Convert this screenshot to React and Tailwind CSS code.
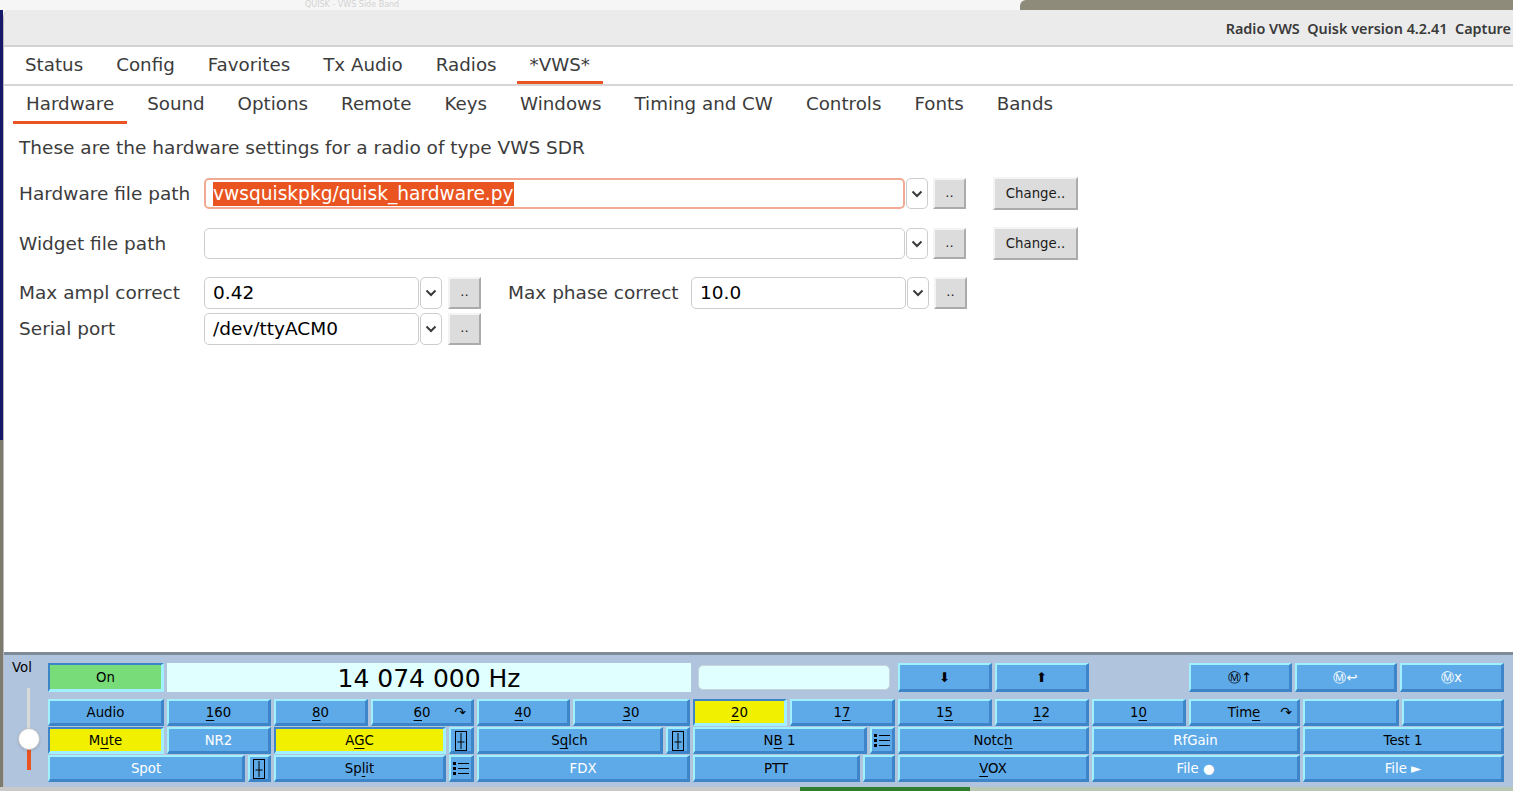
import React from 'react'

const dv = "font-['DejaVu_Sans',sans-serif]"

const raised = 'bg-[#5eaae8] border-t-[#a0f0ff] border-l-[#a0f0ff] border-b-[#3d84c9] border-r-[#3d84c9]'
const pressedB = 'border-t-[#3d84c9] border-l-[#3d84c9] border-b-[#a0f0ff] border-r-[#a0f0ff]'

function Btn({ className = '', pressed, fill, white, children }) {
  const look = pressed ? `${fill} ${pressedB}` : raised
  return (
    <div
      className={`relative flex h-full shrink-0 items-center justify-center border-t-2 border-l-2 border-b-[3px] border-r-[3px] pt-[1px] text-[13.3px] leading-none ${white ? 'text-white' : 'text-black'} ${look} ${className}`}
    >
      <span className="whitespace-pre">{children}</span>
    </div>
  )
}

const U = ({ children }) => <span className="underline decoration-1 underline-offset-[3px]">{children}</span>

const Curl = () => <span className="absolute right-[5px] top-[4px] text-[14px]">↷</span>

const SliderIcon = () => (
  <svg width="14" height="20" viewBox="0 0 14 20" className="inline-block align-middle">
    <rect x="1.5" y="0.5" width="11" height="19" fill="none" stroke="#000" />
    <line x1="7" y1="2" x2="7" y2="18" stroke="#000" />
    <line x1="3.5" y1="11" x2="10.5" y2="11" stroke="#000" />
  </svg>
)

const ListIcon = () => (
  <svg width="18" height="15" viewBox="0 0 18 15" className="inline-block align-middle">
    <rect x="1" y="1" width="3" height="3" fill="#000" />
    <rect x="1" y="6" width="3" height="3" fill="#000" />
    <rect x="1" y="11" width="3" height="3" fill="#000" />
    <line x1="6" y1="2.5" x2="17" y2="2.5" stroke="#000" />
    <line x1="6" y1="7.5" x2="17" y2="7.5" stroke="#000" />
    <line x1="6" y1="12.5" x2="17" y2="12.5" stroke="#000" />
  </svg>
)

const Chevron = () => (
  <svg width="12" height="8" viewBox="0 0 12 8">
    <polyline points="1.5,1.5 6,6 10.5,1.5" fill="none" stroke="#3a3a3a" strokeWidth="2" />
  </svg>
)

function Drop() {
  return (
    <div className="ml-[1px] flex h-full w-[22px] shrink-0 items-center justify-center rounded-[5px] border border-[#cdcdcd] bg-white">
      <Chevron />
    </div>
  )
}

function Dots({ className = '' }) {
  return (
    <div className={`flex h-full w-[33px] shrink-0 items-center justify-center border-t-2 border-l-2 border-b-2 border-r-2 border-t-[#f4f4f4] border-l-[#f4f4f4] border-b-[#ababab] border-r-[#ababab] bg-[#dcdcdc] pb-[2px] text-[13px] text-[#222] ${className}`}>
      ..
    </div>
  )
}

function ChangeBtn() {
  return (
    <div className="ml-[27px] flex h-[33px] w-[85px] shrink-0 items-center justify-center border-t-2 border-l-2 border-b-2 border-r-2 border-t-[#f4f4f4] border-l-[#f4f4f4] border-b-[#ababab] border-r-[#ababab] bg-[#dcdcdc] text-[13.3px] text-[#1a1a1a]">
      Change..
    </div>
  )
}

function Input({ className = '', children }) {
  return (
    <div className={`flex h-full shrink-0 items-center rounded-[5px] border border-[#cdcdcd] bg-white pl-[8px] text-[18.5px] text-black ${className}`}>
      {children}
    </div>
  )
}

const mainTabs = ['Status', 'Config', 'Favorites', 'Tx Audio', 'Radios', '*VWS*']
const subTabs = ['Hardware', 'Sound', 'Options', 'Remote', 'Keys', 'Windows', 'Timing and CW', 'Controls', 'Fonts', 'Bands']

function TabRow({ tabs, active, className }) {
  return (
    <div className={`flex items-stretch gap-[7px] ${className}`}>
      {tabs.map((t) => (
        <div
          key={t}
          className={`flex items-center px-[13px] pt-[1px] text-[18.25px] text-[#3c3c3c] border-b-[3px] ${t === active ? 'border-[#e95420]' : 'border-transparent'}`}
        >
          {t}
        </div>
      ))}
    </div>
  )
}

export default function App() {
  return (
    <div className={`flex h-[791px] w-[1513px] flex-col overflow-hidden bg-[#f4f4f4] ${dv}`}>
      {/* desktop strip above the window */}
      <div className="flex h-[10px] shrink-0">
        <div className="w-[1020px] bg-[#f6f6f6] pl-[305px] text-[8px] leading-[10px] text-[#d2d2d2]">
          QUISK - VWS Side Band
        </div>
        <div className="flex-1 rounded-tl-[6px] bg-[#8e8b7b]" />
      </div>

      <div className="flex min-h-0 flex-1">
        <div className="flex w-[3px] shrink-0 flex-col">
          <div className="h-[430px] bg-[#16186a]" />
          <div className="flex-1 bg-[#7d7a70]" />
        </div>

        {/* window */}
        <div className="flex min-w-0 flex-1 flex-col overflow-hidden rounded-tl-[8px] border-l border-[#b9b9b9] bg-white">
          <div className="flex h-[37px] shrink-0 items-center justify-end border-b-2 border-[#d2d2d2] bg-[#ebebeb] pr-[2px] pt-[2px] font-['Noto_Sans',sans-serif] text-[14.4px] font-semibold whitespace-pre text-[#3a3a3a]">
            Radio VWS  Quisk version 4.2.41  Capture
          </div>

          <TabRow tabs={mainTabs} active="*VWS*" className="h-[39px] shrink-0 border-b-2 border-[#d6d6d6] pl-[8px]" />
          <TabRow tabs={subTabs} active="Hardware" className="h-[38px] shrink-0 pl-[9px]" />

          {/* hardware settings */}
          <div className="flex min-h-0 flex-1 flex-col pl-[15px] pt-[12px] text-[18.5px] text-[#3c3c3c]">
            <div className="h-[24px] leading-[24px]">These are the hardware settings for a radio of type VWS SDR</div>

            <div className="mt-[18px] flex h-[31px] items-center">
              <div className="w-[185px] shrink-0">Hardware file path</div>
              <div className="flex h-full w-[701px] shrink-0 items-center rounded-[5px] border-2 border-[#f2aa92] bg-white pl-[7px] text-[18.6px] text-white">
                <span className="bg-[#e95420] leading-[24px]">vwsquiskpkg/quisk_hardware.py</span>
              </div>
              <Drop />
              <Dots className="ml-[5px]" />
              <ChangeBtn />
            </div>

            <div className="mt-[19px] flex h-[31px] items-center">
              <div className="w-[185px] shrink-0">Widget file path</div>
              <Input className="w-[701px]" />
              <Drop />
              <Dots className="ml-[5px]" />
              <ChangeBtn />
            </div>

            <div className="mt-[18px] flex h-[32px] items-center">
              <div className="w-[185px] shrink-0">Max ampl correct</div>
              <Input className="w-[215px]">0.42</Input>
              <Drop />
              <Dots className="ml-[6px]" />
              <div className="ml-[27px] w-[183px] shrink-0">Max phase correct</div>
              <Input className="w-[215px]">10.0</Input>
              <Drop />
              <Dots className="ml-[5px]" />
            </div>

            <div className="mt-[4px] flex h-[32px] items-center">
              <div className="w-[185px] shrink-0">Serial port</div>
              <Input className="w-[215px]">/dev/ttyACM0</Input>
              <Drop />
              <Dots className="ml-[6px]" />
            </div>
          </div>

          {/* control panel */}
          <div className="flex h-[135px] shrink-0 border-t-[3px] border-[#7f8b98] bg-[#b0c4de]">
            <div className="flex w-[44px] shrink-0 flex-col">
              <div className="mt-[6px] ml-[8px] text-[13.3px] leading-[14px] text-black">Vol</div>
              <div className="relative ml-[23px] mt-[13px] flex h-[82px] w-[3px] flex-col items-center">
                <div className="h-[50px] w-[3px] bg-[#d9d9d9]" />
                <div className="h-[32px] w-[4px] bg-[#e95420]" />
                <div className="absolute left-[-9px] top-[40px] h-[22px] w-[22px] rounded-full border border-[#c4c4c4] bg-white shadow-sm" />
              </div>
            </div>

            <div className="flex flex-col pt-[8px]">
              <div className="flex h-[29px]">
                <Btn pressed fill="bg-[#78dc78]" className="w-[116px]">On</Btn>
                <div className="ml-[3px] flex h-full w-[524px] items-center justify-center bg-[#e0ffff] pt-[2px] text-[25px] text-black">14 074 000 Hz</div>
                <div className="ml-[7px] mt-[2px] h-[25px] w-[192px] rounded-[5px] border border-[#c8d4dc] bg-[#e0ffff]" />
                <Btn className="ml-[8px] w-[94px] text-[11px]">⬇</Btn>
                <Btn className="ml-[3px] w-[94px] text-[11px]">⬆</Btn>
                <Btn className="ml-[100px] w-[103px]">Ⓜ↑</Btn>
                <Btn white className="ml-[3px] w-[102px] text-[#e6f4ff]">Ⓜ↩</Btn>
                <Btn white className="ml-[3px] w-[104px] text-[#e6f4ff]">Ⓜx</Btn>
              </div>

              <div className="mt-[7px] flex flex-col gap-[1px]">
                <div className="flex h-[27px] gap-[3px]">
                  <Btn className="w-[116px]">Audio</Btn>
                  <Btn className="w-[104px]"><U>1</U>60</Btn>
                  <Btn className="w-[94px]"><U>8</U>0</Btn>
                  <Btn className="w-[103px]"><U>6</U>0<Curl /></Btn>
                  <Btn className="w-[93px]"><U>4</U>0</Btn>
                  <Btn className="w-[117px]"><U>3</U>0</Btn>
                  <Btn pressed fill="bg-[#f0f000]" className="w-[94px]"><U>2</U>0</Btn>
                  <Btn className="w-[105px]">1<U>7</U></Btn>
                  <Btn className="w-[94px]">1<U>5</U></Btn>
                  <Btn className="w-[94px]"><U>1</U>2</Btn>
                  <Btn className="w-[94px]">1<U>0</U></Btn>
                  <Btn className="w-[111px]">Tim<U>e</U><Curl /></Btn>
                  <Btn className="w-[96px]" />
                  <Btn className="w-[102px]" />
                </div>

                <div className="flex h-[27px] gap-[3px]">
                  <Btn pressed fill="bg-[#f0f000]" className="w-[116px]">M<U>u</U>te</Btn>
                  <Btn white className="w-[104px]">NR2</Btn>
                  <Btn pressed fill="bg-[#f0f000]" className="w-[172px]">A<U>G</U>C</Btn>
                  <Btn className="w-[25px]"><SliderIcon /></Btn>
                  <Btn className="w-[186px]">S<U>q</U>lch</Btn>
                  <Btn className="w-[24px]"><SliderIcon /></Btn>
                  <Btn className="w-[174px]">N<U>B</U> 1</Btn>
                  <Btn className="w-[25px]"><ListIcon /></Btn>
                  <Btn className="w-[191px]">Notc<U>h</U></Btn>
                  <Btn white className="w-[208px]">RfGain</Btn>
                  <Btn className="w-[201px]">Test 1</Btn>
                </div>

                <div className="flex h-[27px] gap-[3px]">
                  <Btn white className="w-[197px]">Spot</Btn>
                  <Btn className="w-[23px]"><SliderIcon /></Btn>
                  <Btn className="w-[172px]">Sp<U>l</U>it</Btn>
                  <Btn className="w-[25px]"><ListIcon /></Btn>
                  <Btn white className="w-[213px]">FDX</Btn>
                  <Btn className="w-[167px]">PTT</Btn>
                  <Btn className="w-[32px]" />
                  <Btn className="w-[191px]"><U>V</U>OX</Btn>
                  <Btn white className="w-[208px]">File ●</Btn>
                  <Btn white className="w-[201px]">File ►</Btn>
                </div>
              </div>
            </div>
          </div>
        </div>
      </div>

      <div className="flex h-[4px] shrink-0">
        <div className="w-[800px] bg-[#c9c9c9]" />
        <div className="w-[170px] bg-[#2f7d2f]" />
        <div className="flex-1 bg-[#b8c8b4]" />
      </div>
    </div>
  )
}
